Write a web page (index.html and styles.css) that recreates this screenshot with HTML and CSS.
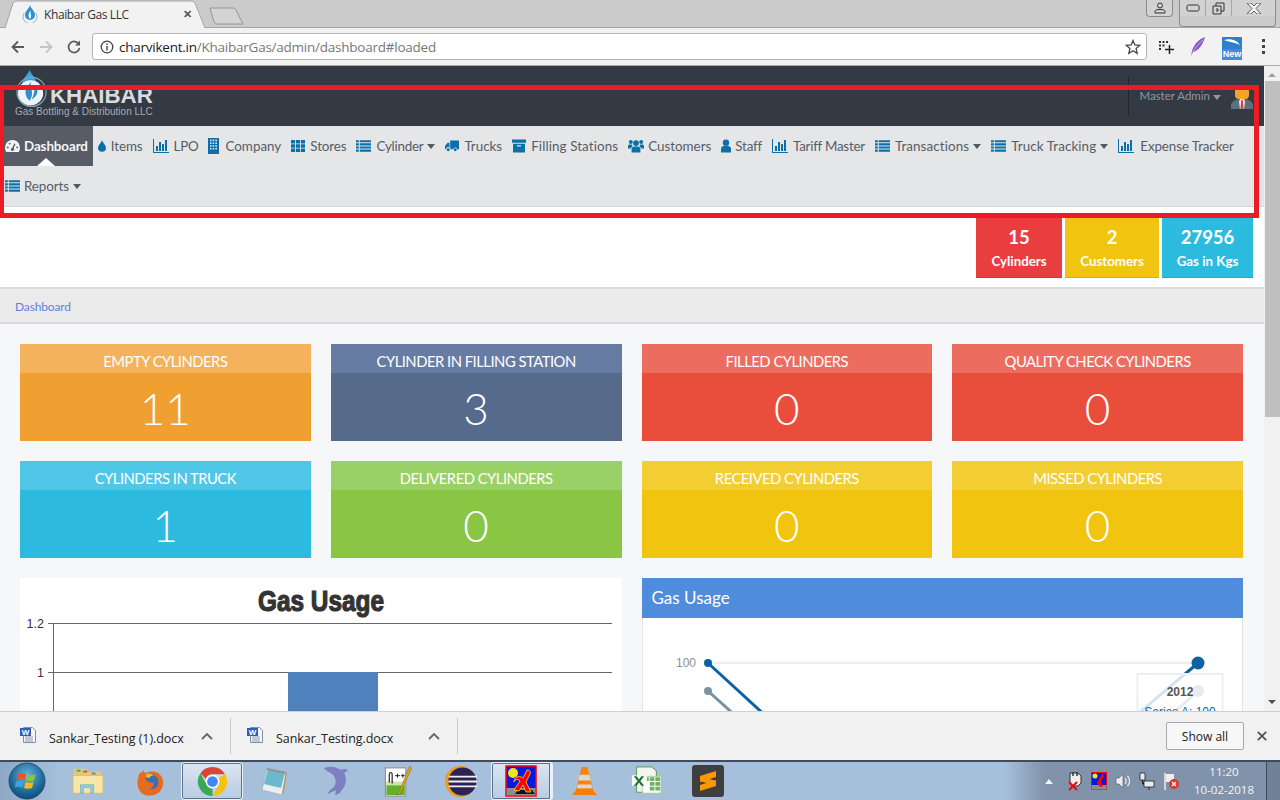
FILE: index.html
```html
<!doctype html>
<html lang="en">

<head>
  <title>Khaibar Gas LLC</title>
  <meta charset="utf-8" />
  <link rel="stylesheet" href="styles.css">
</head>

<body>
  <!-- shared nav glyphs -->
  <svg class="sprite" aria-hidden="true">
    <symbol id="i-list" viewBox="0 0 16 14"><path d="M0 .8h3v2.3H0zM4 .8h12v2.3H4zM0 4.1h3v2.3H0zM4 4.1h12v2.3H4zM0 7.4h3v2.3H0zM4 7.4h12v2.3H4zM0 10.7h3V13H0zM4 10.7h12V13H4z"/></symbol>
    <symbol id="i-th" viewBox="0 0 15 13"><path d="M0 0h4.4v3.9H0zM5.3 0h4.4v3.9H5.3zM10.6 0H15v3.9h-4.4zM0 4.6h4.4v3.8H0zM5.3 4.6h4.4v3.8H5.3zM10.6 4.6H15v3.8h-4.4zM0 9.1h4.4V13H0zM5.3 9.1h4.4V13H5.3zM10.6 9.1H15V13h-4.4z"/></symbol>
    <symbol id="i-chart" viewBox="0 0 16 14"><path d="M0 0h1v13h15v1H0zM3 7h2v5H3zM6 3h2v9H6zM9 5h2v7H9zM12 1h2v11h-2z"/></symbol>
    <symbol id="i-building" viewBox="0 0 11 16"><path fill-rule="evenodd" d="M0 0h11v16H0zM2 1.6h1.6v1.6H2zM4.7 1.6h1.6v1.6H4.7zM7.4 1.6H9v1.6H7.4zM2 4.4h1.6V6H2zM4.7 4.4h1.6V6H4.7zM7.4 4.4H9V6H7.4zM2 7.2h1.6v1.6H2zM4.7 7.2h1.6v1.6H4.7zM7.4 7.2H9v1.6H7.4zM2 10h1.6v1.6H2zM4.7 10h1.6v1.6H4.7zM7.4 10H9v1.6H7.4z"/></symbol>
    <symbol id="i-tint" viewBox="0 0 9 13"><path d="M4.5 0C5.5 3 9 5.5 9 8.5a4.5 4.5 0 0 1-9 0C0 5.5 3.5 3 4.5 0z"/></symbol>
    <symbol id="i-truck" viewBox="0 0 15 12"><path d="M5.5 0H15v9.5h-2a2 2 0 0 0-4 0H6a2 2 0 0 0-.5-1.3zM0 6l2.8-3.5h2V8a2 2 0 0 0-3.6 1.5H0z"/><circle cx="3.5" cy="10" r="1.6"/><circle cx="11" cy="10" r="1.6"/></symbol>
    <symbol id="i-archive" viewBox="0 0 14 13"><path fill-rule="evenodd" d="M0 0h14v3.3H0zM1 4.3h12V13H1zM5 5.8v1.3h4V5.8z"/></symbol>
    <symbol id="i-users" viewBox="0 0 16 13"><circle cx="8" cy="3.6" r="2.9"/><path d="M3.6 13V9.8C3.6 8 5 7 6.4 7h3.2c1.4 0 2.8 1 2.8 2.8V13z"/><circle cx="2.8" cy="2.6" r="2"/><circle cx="13.2" cy="2.6" r="2"/><path d="M0 9V6.8C0 5.6.8 5 1.8 5h2c.2 1 .6 1.5 1 2C3.8 7.3 3 8 2.8 9zM16 9V6.8c0-1.2-.8-1.8-1.8-1.8h-2c-.2 1-.6 1.5-1 2 1 .3 1.8 1 2 2z"/></symbol>
    <symbol id="i-user" viewBox="0 0 10 13"><circle cx="5" cy="3.2" r="3.2"/><path d="M0 13V9.5C0 7.5 1.5 6.5 2.8 6.5h4.4C8.5 6.5 10 7.5 10 9.5V13z"/></symbol>
  </svg>

  <header class="tabstrip">
    <div class="tab">
      <svg class="tab-shape" viewBox="0 0 200 28" preserveAspectRatio="none"><path d="M0 28 8 3Q9 1 12 1H186Q189 1 190 3L200 28" fill="#f2f2f2" stroke="#a4a4a4"/></svg>
      <svg class="favicon" viewBox="0 0 16 18"><path d="M8 0C9 4 13 6 13 10a5 5 0 0 1-10 0C3 6 7 4 8 0z" fill="#2d8fd0"/><path d="M9 5C7 8 11 10 8 14 6 12 6 8 9 5z" fill="#fff"/><path d="M2 8a7 7 0 1 0 12 0" fill="none" stroke="#9fb4c0"/></svg>
      <span class="tab-title">Khaibar Gas LLC</span>
      <span class="tab-close">✕</span>
    </div>
    <svg class="newtab" viewBox="0 0 36 18"><path d="M1 1H24Q26 1 27 3L34 17H7Q6 17 5 15z" fill="#d4d4d4" stroke="#969696"/></svg>
    <div class="winbtns">
      <div class="winbtn profile">
        <svg viewBox="0 0 12 12" width="12" height="12"><circle cx="6" cy="3.5" r="2.5" fill="none" stroke="#333"/><path d="M1 11V9.5C1 8 3 7.5 6 7.5s5 .5 5 2V11z" fill="none" stroke="#333"/></svg>
      </div>
      <div class="wingroup">
        <div class="winbtn"><svg viewBox="0 0 14 8" width="14" height="8"><rect x="1" y="1" width="12" height="6" rx="1.5" fill="none" stroke="#333"/></svg></div>
        <div class="winbtn"><svg viewBox="0 0 13 13" width="13" height="13"><path d="M1 4h8v8H1zM4 4V1h8v8H9M4 7h2v2H4" fill="none" stroke="#333"/></svg></div>
        <div class="winbtn closebtn"><svg viewBox="0 0 16 11" width="16" height="11"><path d="M1 0h4l3 3 3-3h4l-5 5.5 5 5.5h-4L8 8l-3 3H1l5-5.5z" fill="#f2f2f2" stroke="#444" stroke-width=".8"/></svg></div>
      </div>
    </div>
  </header>

  <div class="toolbar">
    <svg class="navarrow" viewBox="0 0 14 14"><path d="M13 7H2M7 1.5 1.5 7 7 12.5" fill="none" stroke="#5a5a5a" stroke-width="1.8"/></svg>
    <svg class="navarrow" viewBox="0 0 14 14"><path d="M1 7h11M7 1.5 12.5 7 7 12.5" fill="none" stroke="#c4c4c4" stroke-width="1.8"/></svg>
    <svg class="navarrow" viewBox="0 0 14 14"><path d="M12 4.5A5.5 5.5 0 1 0 12.5 8" fill="none" stroke="#5a5a5a" stroke-width="1.7"/><path d="M13 .5v5H8z" fill="#5a5a5a"/></svg>
    <div class="omnibox">
      <svg class="info" viewBox="0 0 14 14"><circle cx="7" cy="7" r="5.8" fill="none" stroke="#444" stroke-width="1.3"/><path d="M6.3 6h1.400v4.500H6.300zM6.300 3.500h1.400v1.400H6.300z" fill="#444"/></svg>
      <span class="url"><b>charvikent.in</b>/KhaibarGas/admin/dashboard#loaded</span>
      <svg class="star" viewBox="0 0 16 16"><path d="M8 1.500 9.900 6l4.800.4-3.600 3.200 1.100 4.700L8 11.800l-4.200 2.500 1.100-4.700L1.300 6.400 6.100 6z" fill="none" stroke="#444" stroke-width="1.300"/></svg>
    </div>
    <div class="exts">
      <svg viewBox="0 0 16 16" width="16" height="16"><path d="M1 2h2v2H1zM4.500 2h2v2h-2zM8 2h2v2H8zM1 5.500h2v2H1zM1 9h2v2H1zM4.500 5.500h2v2h-2z" fill="#333"/><path d="M11.500 6v9M7 10.500h9" stroke="#222" stroke-width="1.500"/></svg>
      <svg viewBox="0 0 16 20" width="16" height="20"><path d="M15 0C9 2 4 7 2 14l-1 5 2-4C8 14 13 8 15 0z" fill="#8a5cc8"/><path d="M13 3C9 6 6 10 3 15" stroke="#c7a6ea" fill="none"/></svg>
      <div class="ext-new">
        <svg viewBox="0 0 20 12" width="20" height="12"><rect width="20" height="12" fill="#2d7fc9"/><path d="M2 3C8 1 15 3 18 8 12 5 7 5 2 3z" fill="#fff"/></svg>
        <span>New</span>
      </div>
      <div class="dots"><i></i><i></i><i></i></div>
    </div>
  </div>

  <div class="page">
    <main class="app">
      <div class="topbar">
        <div class="logo">
          <div class="logo-row">
            <svg class="flame" viewBox="0 0 36 40"><path d="M15 0c1 5 7 8 7 14 0 4-3 6-7 6s-7-3-7-6c0-6 6-9 7-14z" fill="#3ba3dc"/><circle cx="17" cy="23" r="15" fill="none" stroke="#7fa9bd" stroke-width="1.200"/><circle cx="16" cy="24" r="13" fill="#eef3f6"/><path d="M18 12c-6 5 4 10-3 20C9 27 9 18 18 12z" fill="#2e8fcb"/><path d="M20 16c5 5 4 11-3 15 3-5 3-10 3-15z" fill="#2e8fcb"/></svg>
            <span class="logo-name">KHAIBAR</span>
          </div>
          <div class="logo-sub">Gas Bottling &amp; Distribution LLC</div>
        </div>
        <div class="account">
          <span class="account-name">Master Admin</span>
          <span class="caret caret-light"></span>
          <svg class="avatar" viewBox="0 0 22 24"><path d="M0 24v-4c0-3 4-5 7-6h8c3 1 7 3 7 6v4z" fill="#5d7080"/><path d="M9 14h4l1 3-1 7H9l-1-7z" fill="#e8e8e8"/><path d="M10.200 15h1.600l.7 9h-3z" fill="#d2453a"/><rect x="4" y="2" width="14" height="12" rx="4" fill="#f2a424"/><path d="M4 6c0-4 3-6 7-6s7 2 7 6l-3-3H7z" fill="#e08e12"/></svg>
        </div>
      </div>

      <nav class="menu">
        <a class="menu-item active"><svg class="ico w15 gap4" viewBox="0 0 16 13"><path d="M8 0a8 8 0 0 0-8 8c0 1.800.5 3.500 1.300 5h13.400c.8-1.500 1.300-3.200 1.300-5a8 8 0 0 0-8-8z" fill="#f4f4f4"/><path d="M8 10 10.500 4" stroke="#585c66" stroke-width="1.500"/><circle cx="8" cy="10" r="1.700" fill="#585c66"/><circle cx="3" cy="8" r="1" fill="#585c66"/><circle cx="5" cy="4" r="1" fill="#585c66"/><circle cx="13" cy="8" r="1" fill="#585c66"/></svg>Dashboard</a>
        <a class="menu-item"><svg class="ico w8"><use href="#i-tint"/></svg>Items</a>
        <a class="menu-item tight"><svg class="ico w16"><use href="#i-chart"/></svg>LPO</a>
        <a class="menu-item even"><svg class="ico w11 tall"><use href="#i-building"/></svg>Company</a>
        <a class="menu-item"><svg class="ico w14"><use href="#i-th"/></svg>Stores</a>
        <a class="menu-item tight"><svg class="ico w15"><use href="#i-list"/></svg>Cylinder<span class="caret"></span></a>
        <a class="menu-item even"><svg class="ico w14"><use href="#i-truck"/></svg>Trucks</a>
        <a class="menu-item wide"><svg class="ico w14"><use href="#i-archive"/></svg>Filling Stations</a>
        <a class="menu-item even"><svg class="ico w16 gap4"><use href="#i-users"/></svg>Customers</a>
        <a class="menu-item snug"><svg class="ico w10 gap4"><use href="#i-user"/></svg>Staff</a>
        <a class="menu-item tight"><svg class="ico w16"><use href="#i-chart"/></svg>Tariff Master</a>
        <a class="menu-item wide"><svg class="ico w15"><use href="#i-list"/></svg>Transactions<span class="caret"></span></a>
        <a class="menu-item wide"><svg class="ico w15"><use href="#i-list"/></svg>Truck Tracking<span class="caret"></span></a>
        <a class="menu-item"><svg class="ico w16 gap6"><use href="#i-chart"/></svg>Expense Tracker</a>
        <a class="menu-item"><svg class="ico w15 gap4"><use href="#i-list"/></svg>Reports<span class="caret"></span></a>
      </nav>

      <section class="summary">
        <div class="stat stat-red"><strong>15</strong><span>Cylinders</span></div>
        <div class="stat stat-yellow"><strong>2</strong><span>Customers</span></div>
        <div class="stat stat-blue"><strong>27956</strong><span>Gas in Kgs</span></div>
      </section>

      <div class="crumbs"><a>Dashboard</a></div>

      <section class="content">
        <div class="tiles">
          <div class="tile orange"><h3>EMPTY CYLINDERS</h3><p>11</p></div>
          <div class="tile slate"><h3>CYLINDER IN FILLING STATION</h3><p>3</p></div>
          <div class="tile red"><h3>FILLED CYLINDERS</h3><p>0</p></div>
          <div class="tile red"><h3>QUALITY CHECK CYLINDERS</h3><p>0</p></div>
          <div class="tile cyan"><h3>CYLINDERS IN TRUCK</h3><p>1</p></div>
          <div class="tile green"><h3>DELIVERED CYLINDERS</h3><p>0</p></div>
          <div class="tile yellow"><h3>RECEIVED CYLINDERS</h3><p>0</p></div>
          <div class="tile yellow"><h3>MISSED CYLINDERS</h3><p>0</p></div>
        </div>

        <div class="charts">
          <div class="chart-card">
            <svg class="chart" viewBox="0 0 602 200" width="602" height="200">
              <text class="bar-title" x="301" y="33" text-anchor="middle" textLength="126" lengthAdjust="spacingAndGlyphs">Gas Usage</text>
              <path d="M28 45.5H592M28 94.5H592" stroke="#666" fill="none"/>
              <path d="M33.5 45V200" stroke="#666" fill="none"/>
              <rect x="268" y="94" width="90" height="106" fill="#4f81bd"/>
              <text class="bar-axis" x="24" y="50" text-anchor="end">1.2</text>
              <text class="bar-axis" x="24" y="99" text-anchor="end">1</text>
            </svg>
          </div>
          <div class="panel">
            <div class="panel-head">Gas Usage</div>
            <div class="panel-body">
              <svg class="chart" viewBox="0 0 600 100" width="600" height="100">
                <text class="line-axis" x="53" y="49" text-anchor="end">100</text>
                <path d="M65 45H555" stroke="#eee" stroke-width="2.5"/>
                <path d="M65 73 95 100" stroke="#7a92a3" stroke-width="3"/>
                <path d="M65 45 125 100" stroke="#0b62a4" stroke-width="3"/>
                <circle cx="65" cy="73" r="4" fill="#7a92a3"/>
                <circle cx="65" cy="45" r="4" fill="#0b62a4"/>
                <path d="M555 45 490 100" stroke="#0b62a4" stroke-width="3"/>
                <path d="M555 73 525 100" stroke="#7a92a3" stroke-width="3"/>
                <circle cx="555" cy="73" r="6" fill="#7a92a3"/>
                <circle cx="555" cy="45" r="6.5" fill="#0b62a4"/>
                <rect x="494.5" y="56" width="85" height="60" fill="#fff" fill-opacity=".82" stroke="#eceff1" stroke-width="2"/>
                <text class="tip-year" x="537" y="78" text-anchor="middle">2012</text>
                <text class="tip-series" x="537" y="98" text-anchor="middle">Series A: 100</text>
              </svg>
            </div>
          </div>
        </div>
      </section>
    </main>
    <aside class="scrollbar">
      <span class="arrow-up"></span>
      <div class="thumb"></div>
      <span class="arrow-down"></span>
    </aside>
    <div class="highlight"></div>
  </div>

  <footer class="downloads">
    <div class="dl-item">
      <svg class="dl-icon" viewBox="0 0 16 16"><path d="M3.5 .5h9l3 3v12h-12z" fill="#f4f6fa" stroke="#7f8db0"/><path d="M5 10h8M5 12h8M5 14h8" stroke="#8d9ab8"/><path d="M0 1h11v8H0z" fill="#2d5fb4"/><text x="5.5" y="8" text-anchor="middle" font-family="Liberation Sans" font-size="8" font-weight="700" fill="#fff">W</text></svg>
      <span class="dl-name">Sankar_Testing (1).docx</span>
      <svg class="dl-caret" viewBox="0 0 12 8"><path d="M1 7 6 2l5 5" fill="none" stroke="#666" stroke-width="1.8"/></svg>
    </div>
    <div class="dl-item">
      <svg class="dl-icon" viewBox="0 0 16 16"><path d="M3.5 .5h9l3 3v12h-12z" fill="#f4f6fa" stroke="#7f8db0"/><path d="M5 10h8M5 12h8M5 14h8" stroke="#8d9ab8"/><path d="M0 1h11v8H0z" fill="#2d5fb4"/><text x="5.5" y="8" text-anchor="middle" font-family="Liberation Sans" font-size="8" font-weight="700" fill="#fff">W</text></svg>
      <span class="dl-name">Sankar_Testing.docx</span>
      <svg class="dl-caret" viewBox="0 0 12 8"><path d="M1 7 6 2l5 5" fill="none" stroke="#666" stroke-width="1.8"/></svg>
    </div>
    <button class="showall">Show all</button>
    <svg class="dl-close" viewBox="0 0 10 10"><path d="M.8.8l8.4 8.4M9.2.8.8 9.2" stroke="#555" stroke-width="1.8"/></svg>
  </footer>

  <div class="taskbar">
    <div class="start">
      <svg viewBox="0 0 38 38" width="38" height="38"><defs><radialGradient id="orb" cx=".5" cy=".35" r=".75"><stop offset="0" stop-color="#6bb6dd"/><stop offset=".6" stop-color="#1b6a9c"/><stop offset="1" stop-color="#0c3d68"/></radialGradient></defs><circle cx="19" cy="19" r="18" fill="url(#orb)" stroke="#2a4e70"/><path d="M10 12c3-1.5 5-1 8 0l-1.500 6c-3-1-5-1-8 0z" fill="#e8552e"/><path d="M19.500 12.500c3 1 5 1 8 0L26 18.500c-3 1-5 1-8 0z" fill="#8cc63f"/><path d="M8 19.500c3-1 5-1 8 0l-1.500 6c-3-1-5-1-8 0z" fill="#39a5dc"/><path d="M17.500 20c3 1 5 1 8 0L24 26c-3 1-5 1-8 0z" fill="#f6b91d"/></svg>
    </div>
    <div class="slot">
      <svg viewBox="0 0 34 32" width="34" height="30"><path d="M2 3h12l3 3h14v6H2z" fill="#e7c877"/><path d="M5 4h4v2H5z" fill="#3faa3f"/><path d="M12 5h4v2h-4z" fill="#d6452e"/><path d="M21 7h4v2h-4z" fill="#3f8fd6"/><path d="M1 10h32v19H1z" fill="#f8e6a8" stroke="#d6bd78"/><path d="M9 29V20h14v9h-3v-6h-8v6z" fill="#8ecdec" stroke="#5b9fca" stroke-width=".6"/></svg>
    </div>
    <div class="slot">
      <svg viewBox="0 0 32 32" width="31" height="31"><path d="M5 7c2 0 3-1 4-3 0 2 1 3 3 3 6-3 13-1 16 5 2 5 1 11-3 15-5 4-13 5-18 1C2 24 1 15 5 7z" fill="#e66a1f"/><path d="M12 8c5-1 11 2 12 7 1 6-4 10-9 9 4-2 5-4 4-7-4 1-7-1-8-4 0-2 0-4 1-5z" fill="#3b6fb5"/><path d="M12 8c3-.5 6 .5 7 2-3 0-4 1-4 2.500-2 0-3-1-4-1.500 0-1 .5-2 1-3z" fill="#f7b423"/></svg>
    </div>
    <div class="slot slot-active">
      <svg viewBox="0 0 32 32" width="31" height="31"><path d="M16 1a15 15 0 0 1 13 7.500H16a7.500 7.500 0 0 0-7 4.800L3.500 7.500A15 15 0 0 1 16 1z" fill="#db4437"/><path d="M29 8.500A15 15 0 0 1 16 31l6.500-11.300a7.500 7.500 0 0 0 0-7.500z" fill="#f4c20d"/><path d="M16 31A15 15 0 0 1 3.500 7.500L9.800 19a7.500 7.500 0 0 0 6.200 4.500z" fill="#3aa757"/><circle cx="16" cy="16" r="7" fill="#fff"/><circle cx="16" cy="16" r="5.500" fill="#4285f4"/></svg>
    </div>
    <div class="slot">
      <svg viewBox="0 0 32 32" width="32" height="32"><path d="M9 3 28 7 24 30 4 25z" fill="#e9eef0" stroke="#9aa4ab" stroke-width=".6"/><path d="M10 4 27 7.500 23 23 6 19z" fill="#6bb8cf"/><path d="M9 3 28 7 27.500 9 8.500 5z" fill="#8b9399"/><path d="M24 30l4-23 1 1-3.500 21z" fill="#b59a63"/></svg>
    </div>
    <div class="slot">
      <svg viewBox="0 0 28 34" width="26" height="32"><path d="M1 3C7 1 13 1 19 5c5-2 7 0 8 1-3 1-4 2-4 3 3 6 2 13-3 18-1 3-4 5-7 5l1-5C8 29 6 31 5 31c1-3 3-5 5-6C15 22 15 13 9 9 6 7 3 6 1 3z" fill="#7e7fc2"/></svg>
    </div>
    <div class="slot">
      <svg viewBox="0 0 30 34" width="30" height="33"><rect x="2" y="3" width="21" height="29" fill="#fff" stroke="#888"/><path d="M3 20h19v11H3z" fill="#62b02f"/><path d="M3 17h19v4H3z" fill="#cfe6a0"/><path d="M6 18V10c0-3 3-3 3 0v9" fill="none" stroke="#222" stroke-width="1.200"/><path d="M12 11h5M14.500 9v4M18 11h4M20 9v4" stroke="#222"/><path d="M27 1 16 28l-2 3 3-1L29 3z" fill="#e8a61d" stroke="#7a5b18" stroke-width=".5"/></svg>
    </div>
    <div class="slot">
      <svg viewBox="0 0 34 34" width="33" height="33"><circle cx="17" cy="17" r="16" fill="#f09a1d"/><circle cx="19" cy="17" r="14.500" fill="#2c2255"/><path d="M5 12h29M4.500 17h29.500M5 22h29" stroke="#f1f1f4" stroke-width="2"/></svg>
    </div>
    <div class="slot slot-active slot-stack">
      <svg viewBox="0 0 32 32" width="32" height="32"><rect x="1" y="1" width="30" height="30" fill="#0a18e0" stroke="#f00" stroke-width="1.500"/><circle cx="8" cy="8" r="5" fill="#f4e21c"/><path d="M1.500 23h29v7.500h-29z" fill="#8d8d8d"/><path d="M10 29h20l-3-4H13z" fill="#111"/><path d="M22 5c3 0 4 2 3 4l-4 8 5 10h-5l-3-7-4 6-5-1 6-9c-3-3-5-1-6 1 0-5 5-7 9-4z" fill="#f00" stroke="#f4e21c" stroke-width=".8"/></svg>
    </div>
    <div class="slot">
      <svg viewBox="0 0 28 32" width="27" height="31"><path d="M11 1h6l6 24H5z" fill="#f58410"/><path d="M9 9h10l1.500 6h-13zM7 19h14l1 4H6z" fill="#d9d9d9"/><path d="M6 24h16l5 6H1z" fill="#f47f0f"/></svg>
    </div>
    <div class="slot">
      <svg viewBox="0 0 34 32" width="32" height="30"><path d="M7 1h16l5 4v23H7z" fill="#f1f7ec" stroke="#4e9b47"/><path d="M13 11h20v18H13z" fill="#fff" stroke="#a8c8a2"/><path d="M14 12h6v4h-6zM21 12h5v4h-5zM27 12h5v4h-5zM21 17h5v4h-5zM27 17h5v4h-5zM21 22h5v4h-5zM27 22h5v4h-5z" fill="#6db25e"/><path d="M2 10h16v11H2z" fill="#f7faf4"/><path d="M4 11h3l2.500 3.500L12 11h3l-4 5 4 5h-3l-2.500-3.500L7 21H4l4-5z" fill="#1d6f35"/></svg>
    </div>
    <div class="slot">
      <svg viewBox="0 0 32 32" width="32" height="32"><rect width="32" height="32" rx="3" fill="#3f3f3f"/><path d="M24 6v6l-16 5v-6zM8 26v-6l16-5v6zM8 11l16 5v5L8 16z" fill="#ff9800"/></svg>
    </div>
    <div class="tray">
      <span class="tray-arrow"></span>
      <svg viewBox="0 0 16 20" width="16" height="20"><path d="M3 2h8l3 3v7l-3 3H5l-2-3z" fill="#eee" stroke="#333"/><path d="M6 1v4M10 1v4" stroke="#333" stroke-width="1.500"/><path d="M2 11l8 8M10 11l-8 8" stroke="#e01010" stroke-width="2"/></svg>
      <svg viewBox="0 0 16 18" width="16" height="18"><rect x=".5" y=".5" width="15" height="17" fill="#0a18e0" stroke="#f00"/><circle cx="4" cy="4" r="2.500" fill="#f4e21c"/><path d="M.5 13h15v4.500H.5z" fill="#8d8d8d"/><path d="M11 2l-5 9 3 4 3-1-2-4 3-6z" fill="#f00"/></svg>
      <svg viewBox="0 0 16 18" width="16" height="18"><path d="M1 6h3l4-4v14l-4-4H1z" fill="#e8edf2" stroke="#58626d" stroke-width=".7"/><path d="M10 6c1.500 2 1.500 4 0 6M12.500 4c2.500 3 2.500 7 0 10" fill="none" stroke="#e8edf2" stroke-width="1.200"/></svg>
      <svg viewBox="0 0 16 18" width="16" height="18"><path d="M1 1h5v7H1zM5 9h10v6H5z" fill="#e8edf2" stroke="#222" stroke-width=".8"/><path d="M3.500 8v4H5M10 15v3" stroke="#222"/></svg>
      <svg viewBox="0 0 16 18" width="16" height="18"><path d="M2 1v17" stroke="#eee" stroke-width="1.500"/><path d="M3 2h8v8H3z" fill="#eee"/><circle cx="11" cy="12" r="5" fill="#d9372d"/><path d="M9 10l4 4M13 10l-4 4" stroke="#fff" stroke-width="1.300"/></svg>
      <div class="clock"><span>11:20</span><span>10-02-2018</span></div>
    </div>
    <div class="show-desktop"></div>
  </div>
</body>

</html>
```

FILE: styles.css
```css
html,
body {
  margin: 0;
  height: 100%;
}

body {
  display: flex;
  flex-direction: column;
  width: 1280px;
  height: 800px;
  overflow: hidden;
  font-family: "Lato", "Open Sans", sans-serif;
  background: #fff;
}

.sprite {
  position: absolute;
  width: 0;
  height: 0;
}

/* browser frame */
.tabstrip {
  display: flex;
  flex: none;
  height: 28px;
  padding-left: 5px;
  background: #cbcbcb;
  border-bottom: 1px solid #a4a4a4;
  box-sizing: border-box;
}

.tab {
  position: relative;
  display: flex;
  align-items: center;
  width: 200px;
  height: 28px;
  padding-left: 17px;
  box-sizing: border-box;
  font: 12px "Open Sans", sans-serif;
  color: #333;
}

.tab-shape {
  position: absolute;
  left: 0;
  top: 0;
  width: 200px;
  height: 28px;
}

.favicon {
  position: relative;
  width: 16px;
  height: 18px;
  margin-right: 6px;
}

.tab-title {
  position: relative;
  letter-spacing: -.4px;
}

.tab-close {
  position: absolute;
  left: 178px;
  top: 6px;
  font-size: 11px;
  font-weight: 700;
  color: #555;
}

.newtab {
  width: 36px;
  height: 18px;
  margin: 7px 0 0 4px;
}

.winbtns {
  display: flex;
  margin-left: auto;
  gap: 6px;
  padding-right: 4px;
}

.winbtn {
  display: flex;
  align-items: center;
  justify-content: center;
  height: 16px;
  width: 25px;
  background: #d2d2d2;
}

.profile {
  border: 1px solid #8c8c8c;
  border-top: 0;
  border-radius: 0 0 4px 4px;
}

.wingroup {
  display: flex;
  border: 1px solid #8c8c8c;
  border-top: 0;
  border-radius: 0 0 4px 4px;
  overflow: hidden;
}

.wingroup .winbtn + .winbtn {
  border-left: 1px solid #a8a8a8;
}

.closebtn {
  width: 43px;
}

.toolbar {
  display: flex;
  flex: none;
  align-items: center;
  height: 38px;
  padding-left: 11px;
  background: #f2f2f2;
  border-bottom: 1px solid #a9a9a9;
  box-sizing: border-box;
}

.navarrow {
  width: 14px;
  height: 14px;
  margin-right: 14px;
}

.omnibox {
  display: flex;
  align-items: center;
  width: 1055px;
  height: 27px;
  margin-left: -3px;
  padding: 0 5px 0 7px;
  box-sizing: border-box;
  background: #fff;
  border: 1px solid #b4b4b4;
  border-radius: 3px;
}

.info {
  width: 14px;
  height: 14px;
  margin-right: 5px;
}

.url {
  font: 13.5px "Open Sans", sans-serif;
  letter-spacing: -.24px;
  color: #777;
}

.url b {
  font-weight: 400;
  color: #1a1a1a;
}

.star {
  width: 16px;
  height: 16px;
  margin-left: auto;
}

.exts {
  display: flex;
  align-items: center;
  margin-left: 11px;
  gap: 16px;
}

.ext-new {
  display: flex;
  flex-direction: column;
  align-items: center;
  width: 20px;
  margin-top: 3px;
}

.ext-new span {
  display: block;
  width: 20px;
  font: 700 9px/11px "Liberation Sans", sans-serif;
  text-align: center;
  color: #fff;
  background: #3f8be8;
}

.dots {
  display: flex;
  flex-direction: column;
  gap: 3px;
  margin-left: 4px;
}

.dots i {
  width: 3px;
  height: 3px;
  background: #444;
}

/* page */
.page {
  position: relative;
  display: flex;
  flex: 1;
  min-height: 0;
}

.app {
  width: 1264px;
  overflow: hidden;
  background: #f6f7f9;
}

.topbar {
  display: flex;
  height: 60px;
  padding-left: 15px;
  background: #343a43;
}

.logo {
  margin-top: 3px;
}

.logo-row {
  display: flex;
  align-items: flex-end;
  height: 36px;
}

.flame {
  width: 35px;
  height: 40px;
  flex: none;
  margin-bottom: -4px;
}

.logo-name {
  font: 700 22.3px/24px "Liberation Sans", sans-serif;
  color: #d9dcdf;
  margin-bottom: -3px;
}

.logo-sub {
  margin-top: 1px;
  font: 10px/12px "Liberation Sans", sans-serif;
  color: #a5abb0;
}

.account {
  display: flex;
  align-items: flex-start;
  height: 40px;
  margin: 10px 0 0 auto;
  padding: 0 11px 0 10px;
  border-left: 1px solid #22262c;
}

.account-name {
  margin-top: 13px;
  font-size: 11.5px;
  color: #8f97a1;
}

.caret {
  display: inline-block;
  width: 0;
  height: 0;
  margin-left: 4px;
  border-left: 4.5px solid transparent;
  border-right: 4.5px solid transparent;
  border-top: 5px solid #55585f;
}

.caret-light {
  margin: 19px 0 0 3px;
  border-top-color: #8f97a1;
}

.avatar {
  width: 22px;
  height: 24px;
  margin: 9px 0 0 10px;
}

.menu {
  display: flex;
  flex-wrap: wrap;
  height: 80px;
  background: #e4e6e8;
  border-bottom: 1px solid #d4d5d7;
}

.menu-item {
  position: relative;
  display: flex;
  align-items: center;
  height: 40px;
  padding: 0 5px;
  font-size: 13.4px;
  letter-spacing: -.1px;
  color: #585c66;
}

.menu-item.even {
  letter-spacing: 0;
}

.menu-item.wide {
  letter-spacing: .1px;
}

.menu-item.snug {
  letter-spacing: -.2px;
}

.menu-item.tight {
  letter-spacing: -.25px;
}

.menu-item.active {
  color: #f6f6f6;
  background: #585c66;
  font-weight: 700;
}

/* notch under the current page */
.menu-item.active::after {
  content: "";
  position: absolute;
  left: 37px;
  bottom: 0;
  border-left: 9px solid transparent;
  border-right: 9px solid transparent;
  border-bottom: 8px solid #fff;
}

.ico {
  flex: none;
  height: 14px;
  margin-right: 5px;
  fill: #0c70a8;
}

.ico.gap4 {
  margin-right: 4px;
}

.ico.gap6 {
  margin-right: 6px;
}

.ico.tall {
  height: 16px;
  margin-right: 6px;
}

.w8 {
  width: 8px;
}

.w10 {
  width: 10px;
}

.w11 {
  width: 11px;
}

.w14 {
  width: 14px;
}

.w15 {
  width: 15px;
}

.w16 {
  width: 16px;
}

.summary {
  display: flex;
  justify-content: flex-end;
  gap: 3px;
  height: 82px;
  padding-right: 11px;
  box-sizing: border-box;
  background: #fff;
  border-bottom: 2px solid #d9d9d9;
}

.stat {
  display: flex;
  flex-direction: column;
  align-items: center;
  height: 61px;
  margin-top: 10px;
  padding-top: 9px;
  box-sizing: border-box;
  color: #fff;
  border-bottom: 1px solid rgba(0, 0, 0, .1);
}

.stat strong {
  font-size: 18.5px;
  line-height: 22px;
}

.stat span {
  margin-top: 5px;
  font-size: 13.3px;
  font-weight: 700;
  line-height: 16px;
}

.stat-red {
  width: 86px;
  background: #e83e3f;
}

.stat-yellow {
  width: 94px;
  background: #f1c40f;
}

.stat-blue {
  width: 91px;
  background: #2bbbdf;
}

.crumbs {
  display: flex;
  align-items: center;
  height: 31px;
  padding: 2px 0 0 15px;
  background: #ebebeb;
  border-bottom: 2px solid #d9d9d9;
  font-size: 12px;
  letter-spacing: -.15px;
  color: #5b83dc;
}

.content {
  padding: 20px 21px 0 20px;
}

.tiles {
  display: grid;
  grid-template-columns: repeat(4, minmax(0, 1fr));
  gap: 20px;
}

.tile {
  height: 97px;
  text-align: center;
  color: #fff;
  background: var(--body);
}

.tile h3 {
  height: 29px;
  margin: 0;
  font-size: 14.8px;
  font-weight: 400;
  line-height: 35px;
  letter-spacing: -.5px;
  background: var(--head);
}

.tile p {
  margin: 0;
  font-size: 44px;
  font-weight: 300;
  line-height: 70px;
}

.orange {
  --head: #f3b25b;
  --body: #f0a030;
}

.slate {
  --head: #667ca3;
  --body: #566a8c;
}

.red {
  --head: #ec6d60;
  --body: #e94e3d;
}

.cyan {
  --head: #50c7e6;
  --body: #2cbbdf;
}

.green {
  --head: #99d166;
  --body: #88c644;
}

.yellow {
  --head: #f3ce33;
  --body: #f1c40f;
}

.charts {
  display: grid;
  grid-template-columns: repeat(2, minmax(0, 1fr));
  gap: 20px;
  margin-top: 20px;
}

.chart-card {
  height: 200px;
  overflow: hidden;
  background: #fff;
}

.chart {
  display: block;
}

.bar-title {
  font: 700 30px "Liberation Sans Narrow", "Liberation Sans", sans-serif;
  fill: #333;
  stroke: #333;
  stroke-width: 1.2px;
}

.bar-axis {
  font: 12.5px "Liberation Sans", sans-serif;
  fill: #333;
}

.panel {
  height: 200px;
  background: #fff;
  border: 1px solid #e2e4e7;
  border-top: 0;
}

.panel-head {
  height: 40px;
  margin: 0 -1px;
  padding-left: 10px;
  font-size: 17px;
  line-height: 40px;
  color: #fff;
  background: #4f8cdc;
}

.panel-body {
  overflow: hidden;
}

.line-axis {
  font: 12px "Liberation Sans", sans-serif;
  fill: #8f8f8f;
}

.tip-year {
  font: 700 12px "Liberation Sans", sans-serif;
  fill: #555;
}

.tip-series {
  font: 12px "Liberation Sans", sans-serif;
  fill: #0b62a4;
}

.scrollbar {
  display: flex;
  flex-direction: column;
  align-items: center;
  width: 16px;
  background: #f1f1f1;
}

.thumb {
  flex: none;
  width: 15px;
  height: 336px;
  margin: 4px 0 0 1px;
  background: #bfbfbf;
}

.arrow-up,
.arrow-down {
  width: 0;
  height: 0;
  border-left: 4px solid transparent;
  border-right: 4px solid transparent;
}

.arrow-up {
  margin-top: 7px;
  border-bottom: 4px solid #a0a0a0;
}

.arrow-down {
  margin-top: auto;
  margin-bottom: 7px;
  border-top: 4px solid #505050;
}

/* annotation drawn over the screenshot */
.highlight {
  position: absolute;
  left: 0;
  top: 19px;
  width: 1259px;
  height: 133px;
  box-sizing: border-box;
  border: 5px solid #ed1c24;
  border-left-width: 4px;
  pointer-events: none;
}

/* download shelf */
.downloads {
  display: flex;
  flex: none;
  align-items: center;
  height: 49px;
  box-sizing: border-box;
  background: #f1f1f1;
  border-top: 1px solid #d0d0d0;
}

.dl-item {
  display: flex;
  align-items: center;
  height: 36px;
  padding-left: 20px;
  border-right: 1px solid #c8c8c8;
  font: 12.5px "Open Sans", sans-serif;
  letter-spacing: -.07px;
  color: #222;
}

.dl-item + .dl-item {
  padding-left: 16px;
}

.dl-icon {
  width: 16px;
  height: 16px;
  margin: -2px 13px 0 0;
}

.dl-name {
  width: 152px;
  padding-top: 4px;
  white-space: nowrap;
}

.dl-caret {
  width: 12px;
  height: 8px;
  margin-right: 17px;
}

.showall {
  width: 78px;
  height: 28px;
  margin-left: auto;
  padding: 0;
  font: 12px "Open Sans", sans-serif;
  color: #222;
  background: #f7f7f7;
  border: 1px solid #a8a8a8;
  border-radius: 2px;
}

.dl-close {
  width: 10px;
  height: 10px;
  margin: 0 13px;
}

/* windows taskbar */
.taskbar {
  display: flex;
  flex: none;
  align-items: center;
  height: 40px;
  box-sizing: border-box;
  background: linear-gradient(90deg, #8da7c5 0, #a6bfdb 60px, #a6bfdb 1005px, #8093aa 1045px);
  border-top: 2px solid #3e4c5c;
}

.start {
  display: flex;
  justify-content: center;
  width: 57px;
  padding-right: 4px;
  box-sizing: border-box;
}

.slot {
  display: flex;
  flex: none;
  align-items: center;
  justify-content: center;
  width: 62px;
  height: 38px;
  box-sizing: border-box;
}

.slot-active {
  background: linear-gradient(180deg, #dbe6f2, #b7cbe2);
  border: 1px solid #eaf1f8;
  border-radius: 3px;
  box-shadow: 0 0 0 1px #5d7288 inset;
}

.slot-stack {
  border-right-width: 3px;
}

.tray {
  display: flex;
  align-items: center;
  margin-left: auto;
  gap: 8px;
}

.tray-arrow {
  width: 0;
  height: 0;
  margin-right: 6px;
  border-left: 4px solid transparent;
  border-right: 4px solid transparent;
  border-bottom: 5px solid #f0f3f6;
}

.clock {
  display: flex;
  flex-direction: column;
  align-items: center;
  width: 60px;
  margin-left: 7px;
  font: 11.5px/18px "Open Sans", sans-serif;
  color: #f4f6f8;
}

.show-desktop {
  flex: none;
  width: 14px;
  height: 38px;
  margin-left: 12px;
  background: #6f8298;
  border-left: 1px solid #3e4c5c;
  box-sizing: border-box;
}
```
